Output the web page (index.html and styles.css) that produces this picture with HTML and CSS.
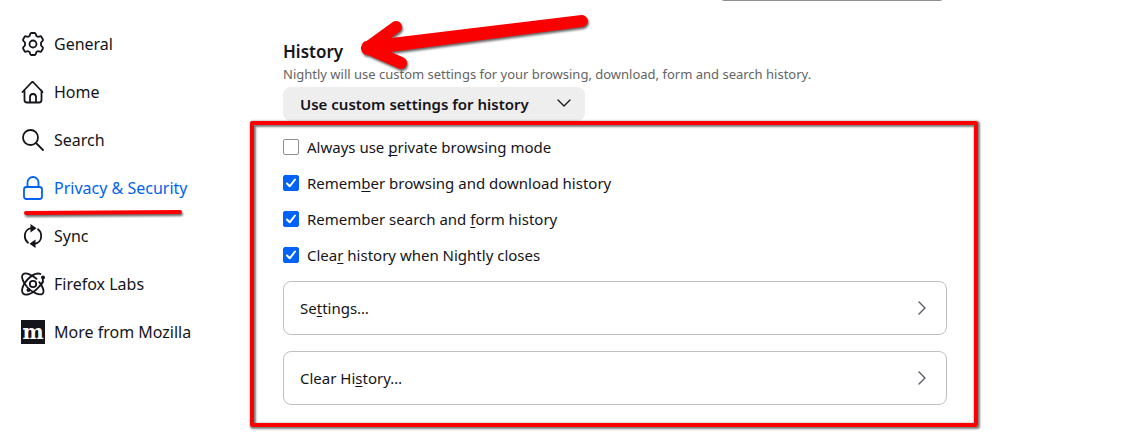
FILE: index.html
```html
<!DOCTYPE html>
<html lang="en">
<head>
    <meta charset="UTF-8">
    <meta name="viewport" content="width=device-width, initial-scale=1.0">
    <title>Settings</title>
    <link rel="stylesheet" href="styles.css">
</head>
<body>
    <div class="page">
        <!-- Category navigation -->
        <nav class="sidebar">
            <a class="category" href="#general">
                <svg class="icon" viewBox="0 0 24 24">
                    <path d="M10.500 1h3q1 0 1.300 1l.6 2 1.400.8 2.200-.5q1-.2 1.500.7l1.300 2.200q.5.900-.2 1.600L20 10.500v3l1.600 1.700q.7.700.2 1.600L20.500 19q-.5.900-1.500.7l-2.200-.5-1.400.8-.6 2q-.3 1-1.300 1h-3q-1 0-1.300-1l-.6-2-1.400-.8-2.200.5q-1 .2-1.500-.7l-1.300-2.200q-.5-.900.2-1.600L4 13.500v-3L2.400 8.800q-.7-.7-.2-1.600L3.500 5q.5-.900 1.500-.7l2.200.5L8.600 4l.6-2q.3-1 1.300-1z"/>
                    <circle cx="12" cy="12" r="3.500"/>
                </svg>
                <span>General</span>
            </a>
            <a class="category" href="#home">
                <svg class="icon" viewBox="0 0 24 24">
                    <path d="M1.500 12 10.500 2.500q1-1 2 0L21.500 12M3.500 10.500V20a2.500 2.500 0 0 0 2.500 2.500h12a2.500 2.500 0 0 0 2.500-2.500v-9.500M9 22.500V17a3 3 0 0 1 6 0v5.500"/>
                </svg>
                <span>Home</span>
            </a>
            <a class="category" href="#search">
                <svg class="icon" viewBox="0 0 24 24">
                    <circle cx="9.500" cy="9.500" r="7.500"/>
                    <path d="m15 15 7 7"/>
                </svg>
                <span>Search</span>
            </a>
            <a class="category selected" href="#privacy">
                <svg class="icon" viewBox="0 0 24 24">
                    <rect x="3" y="11" width="18" height="12" rx="2.500"/>
                    <path d="M6.500 11V6.500a5.500 5.500 0 0 1 11 0V11"/>
                </svg>
                <span>Privacy &amp; Security</span>
                <svg class="underline-mark" viewBox="0 0 162 10">
                    <path d="M4 5 158 4"/>
                </svg>
            </a>
            <a class="category" href="#sync">
                <svg class="icon" viewBox="0 0 24 24">
                    <path d="M11 4.200C6 4.500 3.800 8.300 3.800 12c0 3 1.200 5.200 3.200 6.700M13 19.800c5-.3 7.200-4.100 7.200-7.800 0-3-1.200-5.200-3.200-6.700"/>
                    <path class="solid" d="M9.500 0v8.500l6-4.200zM14.500 24v-8.500l-6 4.200z"/>
                </svg>
                <span>Sync</span>
            </a>
            <a class="category" href="#labs">
                <svg class="icon" viewBox="0 0 24 24">
                    <circle cx="12" cy="12" r="3.200"/>
                    <path d="M15.500 6.800C10.500 2.500 4.500 0 2 2.300S2.500 11 6.500 15.500 18.500 24 21.500 21.700c2.300-2 .5-7-3.200-11.600"/>
                    <path d="M19.500 2C16 .5 10.500 3.500 6.500 7.500S-.5 18.500 2 21.300s9 .5 13.500-4S23 10.500 21.800 7.500"/>
                    <circle class="solid" cx="22" cy="5.500" r="2"/>
                    <circle class="solid" cx="7.500" cy="18" r="2"/>
                </svg>
                <span>Firefox Labs</span>
            </a>
            <a class="category" href="#more">
                <span class="mozilla-logo">m</span>
                <span>More from Mozilla</span>
            </a>
        </nav>

        <main class="content">
            <div class="search-bar">
                <input type="search" aria-label="Find in Settings">
            </div>

            <!-- History -->
            <section class="history">
                <h2>History</h2>
                <svg class="arrow-mark" viewBox="0 0 240 60">
                    <path class="shaft" d="M14 36 229 10l1 1-1 1L14 40z"/>
                    <path class="head" d="M43 17 14 38l34 15"/>
                </svg>
                <label class="description" for="historyMode">Nightly will use custom settings for your browsing, download, form and search history.</label>
                <div class="select-wrap">
                    <select id="historyMode">
                        <option>Use custom settings for history</option>
                    </select>
                    <svg class="chevron" viewBox="0 0 16 16"><path d="m2 5 6 6 6-6"/></svg>
                </div>

                <div class="options">
                    <label class="check-row">
                        <input type="checkbox">
                        <span>Always use <u>p</u>rivate browsing mode</span>
                    </label>
                    <label class="check-row">
                        <input type="checkbox" checked>
                        <span>Remem<u>b</u>er browsing and download history</span>
                    </label>
                    <label class="check-row">
                        <input type="checkbox" checked>
                        <span>Remember search and <u>f</u>orm history</span>
                    </label>
                    <label class="check-row">
                        <input type="checkbox" checked>
                        <span>Clea<u>r</u> history when Nightly closes</span>
                    </label>
                    <button class="box-button" type="button">
                        <span>Se<u>t</u>tings…</span>
                        <svg class="chevron-right" viewBox="0 0 16 16"><path d="m5 2 6 6-6 6"/></svg>
                    </button>
                    <button class="box-button" type="button">
                        <span>Clear Hi<u>s</u>tory…</span>
                        <svg class="chevron-right" viewBox="0 0 16 16"><path d="m5 2 6 6-6 6"/></svg>
                    </button>
                    <div class="highlight"></div>
                </div>
            </section>
        </main>
    </div>
</body>
</html>
```
FILE: styles.css
```css
* {
    box-sizing: border-box;
    margin: 0;
    padding: 0;
}

body {
    font-family: "Noto Sans", sans-serif;
    font-size: 15px;
    line-height: 20px;
    color: #15141a;
    background-color: white;
}

.page {
    display: flex;
    min-height: 100vh;
}

/* Sidebar */
.sidebar {
    flex: 0 0 283px;
    padding: 20px 20px 0 21px;
}

.category {
    position: relative;
    display: flex;
    align-items: center;
    gap: 9px;
    height: 48px;
    font-size: 16px;
    color: inherit;
    text-decoration: none;
}

.category.selected {
    color: #0062f0;
}

svg {
    display: block;
    fill: none;
    stroke: currentColor;
    stroke-linecap: round;
    stroke-linejoin: round;
}

.icon {
    width: 24px;
    height: 24px;
    stroke-width: 1.8;
    overflow: visible;
}

.icon .solid {
    fill: currentColor;
    stroke: none;
}

.mozilla-logo {
    width: 24px;
    height: 24px;
    background-color: #15141a;
    color: white;
    font-family: "DejaVu Serif", serif;
    font-weight: bold;
    font-size: 20px;
    line-height: 24px;
    display: flex;
    justify-content: center;
}

/* Main pane */
.content {
    flex: 1;
    min-width: 0;
    max-width: 664px;
}

.search-bar {
    display: flex;
    justify-content: flex-end;
    align-items: flex-end;
    height: 1px;
    margin-right: 3px;
    overflow: hidden;
}

.search-bar input {
    flex: none;
    width: 224px;
    height: 32px;
    border: 1px solid #8f8f8f;
    border-radius: 4px;
}

.history {
    position: relative;
    padding: 38px 0 29px;
}

h2 {
    font-size: 17px;
    line-height: 25px;
    font-weight: 600;
}

.description {
    display: block;
    font-size: 13px;
    color: #646464;
}

.select-wrap {
    position: relative;
    width: 302px;
    margin-top: 3px;
}

select {
    appearance: none;
    display: block;
    width: 100%;
    height: 34px;
    padding: 0 48px 0 17px;
    border: none;
    border-radius: 8px;
    background-color: #eeeeee;
    color: inherit;
    font: inherit;
    font-weight: 600;
}

.chevron {
    position: absolute;
    right: 13px;
    top: 8px;
    width: 16px;
    height: 16px;
    stroke-width: 1.3;
    pointer-events: none;
}

.options {
    position: relative;
    display: flex;
    flex-direction: column;
    gap: 16px;
    margin-top: 16px;
}

.check-row {
    display: flex;
    align-items: center;
    gap: 8px;
}

.check-row input {
    appearance: none;
    flex: none;
    width: 16px;
    height: 16px;
    border: 1px solid #8f8f8f;
    border-radius: 2px;
    background-color: white;
}

.check-row input:checked {
    border-color: #0062fa;
    background: #0062fa url("data:image/svg+xml,%3Csvg xmlns='http://www.w3.org/2000/svg' viewBox='0 0 14 14'%3E%3Cpath d='m3 7.500 2.700 2.800L11 3.500' fill='none' stroke='white' stroke-width='2' stroke-linecap='round' stroke-linejoin='round'/%3E%3C/svg%3E") center / 14px;
}

u {
    text-decoration-skip-ink: none;
    text-decoration-thickness: 1px;
    text-underline-offset: 2px;
}

.box-button {
    display: flex;
    justify-content: space-between;
    align-items: center;
    height: 54px;
    padding: 0 16px;
    border: 1px solid #bfbfc4;
    border-radius: 8px;
    background-color: white;
    color: inherit;
    font: inherit;
    text-align: left;
}

.chevron-right {
    width: 16px;
    height: 16px;
    color: #5b5b66;
    stroke-width: 1.4;
}

/* Red markings */
.highlight {
    position: absolute;
    inset: -16px -31px -22px -33px;
    border: 4px solid #fb0000;
    border-radius: 2px;
    box-shadow: 1px 1px 2px 1px rgba(0, 0, 0, 0.5), inset 1px 1px 2px 1px rgba(0, 0, 0, 0.5);
    pointer-events: none;
}

.underline-mark,
.arrow-mark {
    position: absolute;
    color: #fb0000;
    filter: drop-shadow(1px 2px 1px rgba(0, 0, 0, 0.6));
    pointer-events: none;
}

.underline-mark {
    left: 1px;
    top: 44px;
    width: 162px;
    height: 10px;
    stroke-width: 4;
}

.arrow-mark {
    left: 70px;
    top: 9px;
    width: 240px;
    height: 60px;
}

.arrow-mark .shaft {
    fill: currentColor;
    stroke-width: 10;
}

.arrow-mark .head {
    stroke-width: 12;
}
```
